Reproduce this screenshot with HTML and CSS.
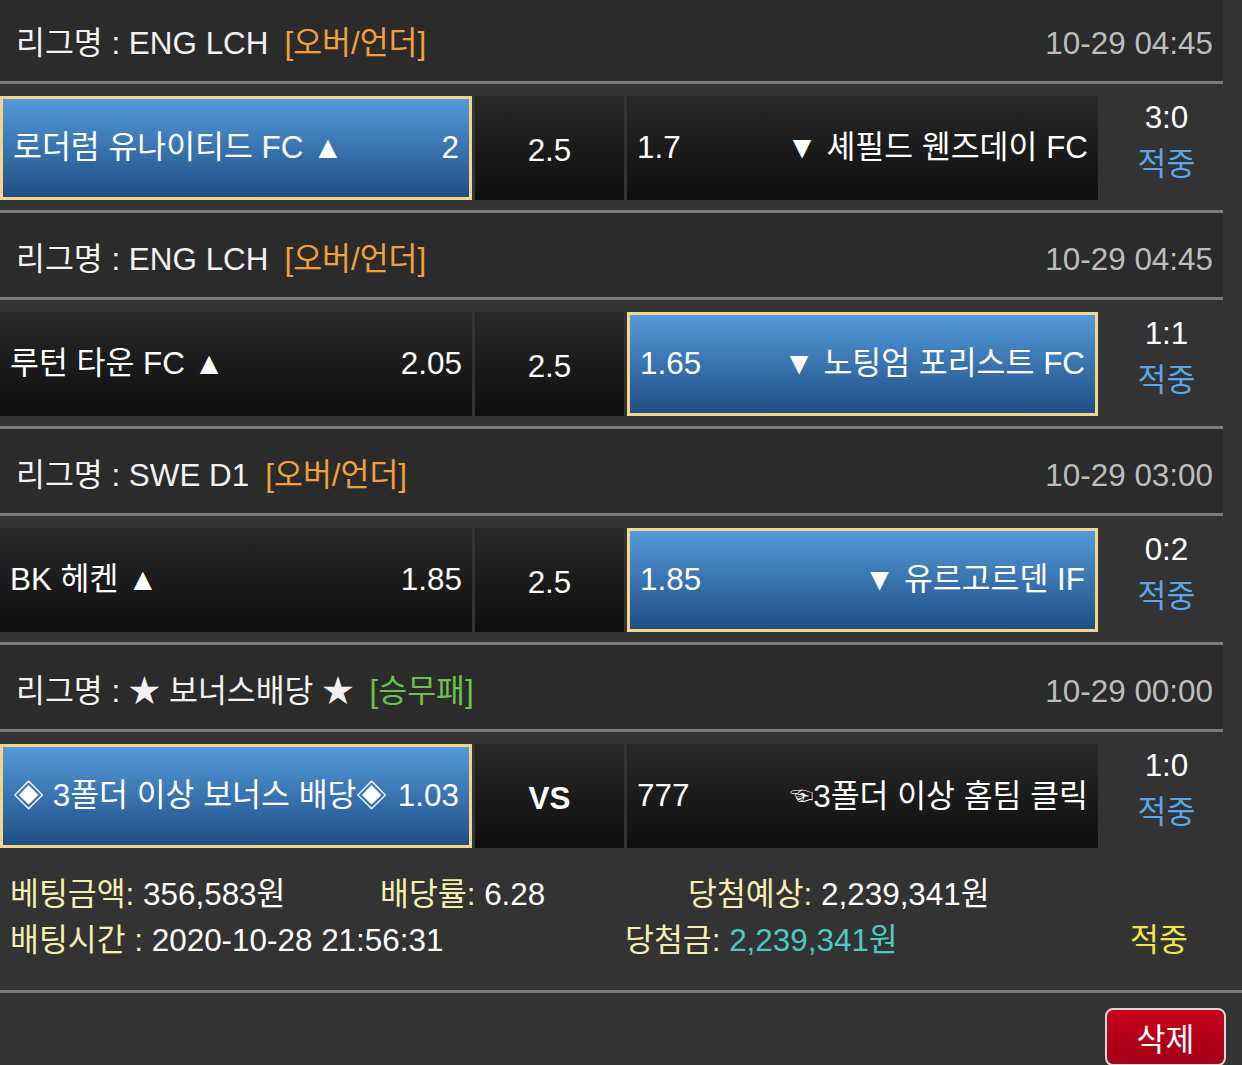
FILE: index.html
```html
<!DOCTYPE html>
<html lang="ko">
<head>
<meta charset="utf-8">
<title>배팅내역</title>
<link rel="stylesheet" href="styles.css">
</head>
<body>
<div class="list">
  <section class="game">
    <div class="league"><span>리그명 : ENG LCH</span><span class="type ou">[오버/언더]</span><span class="date">10-29 04:45</span></div>
    <div class="bet">
      <div class="cell home sel"><span>로더럼 유나이티드 FC ▲</span><span>2</span></div>
      <div class="cell line">2.5</div>
      <div class="cell away"><span>1.7</span><span>▼ 셰필드 웬즈데이 FC</span></div>
      <div class="result"><span>3:0</span><span class="hit">적중</span></div>
    </div>
  </section>
  <section class="game">
    <div class="league"><span>리그명 : ENG LCH</span><span class="type ou">[오버/언더]</span><span class="date">10-29 04:45</span></div>
    <div class="bet">
      <div class="cell home"><span>루턴 타운 FC ▲</span><span>2.05</span></div>
      <div class="cell line">2.5</div>
      <div class="cell away sel"><span>1.65</span><span>▼ 노팅엄 포리스트 FC</span></div>
      <div class="result"><span>1:1</span><span class="hit">적중</span></div>
    </div>
  </section>
  <section class="game">
    <div class="league"><span>리그명 : SWE D1</span><span class="type ou">[오버/언더]</span><span class="date">10-29 03:00</span></div>
    <div class="bet">
      <div class="cell home"><span>BK 헤켄 ▲</span><span>1.85</span></div>
      <div class="cell line">2.5</div>
      <div class="cell away sel"><span>1.85</span><span>▼ 유르고르덴 IF</span></div>
      <div class="result"><span>0:2</span><span class="hit">적중</span></div>
    </div>
  </section>
  <section class="game">
    <div class="league"><span>리그명 : ★ 보너스배당 ★</span><span class="type wdl">[승무패]</span><span class="date">10-29 00:00</span></div>
    <div class="bet">
      <div class="cell home sel"><span>◈ 3폴더 이상 보너스 배당◈</span><span>1.03</span></div>
      <div class="cell line vs">VS</div>
      <div class="cell away"><span>777</span><span><span class="hand">☜</span>3폴더 이상 홈팀 클릭</span></div>
      <div class="result"><span>1:0</span><span class="hit">적중</span></div>
    </div>
  </section>
</div>
<div class="summary">
  <div class="srow first">
    <span><span class="lbl">베팅금액:</span> 356,583원</span>
    <span><span class="lbl">배당률:</span> 6.28</span>
    <span><span class="lbl">당첨예상:</span> 2,239,341원</span>
  </div>
  <div class="srow second">
    <span><span class="lbl">배팅시간 :</span> 2020-10-28 21:56:31</span>
    <span><span class="lbl">당첨금:</span> <span class="win">2,239,341원</span></span>
    <span class="status">적중</span>
  </div>
</div>
<div class="foot">
  <div class="del">삭제</div>
</div>
</body>
</html>
```
FILE: styles.css
```css
html, body {
  margin: 0;
  padding: 0;
}
body {
  background: #333333;
  color: #ffffff;
  font-family: "Liberation Sans", "Noto Sans CJK KR", sans-serif;
  font-size: 32px;
  font-size-adjust: 0.5186;
  width: 1242px;
  height: 1065px;
  overflow: hidden;
}
.list {
  margin-top: -6px;
}
.league {
  display: flex;
  align-items: center;
  box-sizing: border-box;
  height: 90px;
  margin-right: 19px;
  padding: 10px 10px 0 16px;
  background: #2b2b2b;
  border-top: 3px solid #7b7b7b;
  border-bottom: 3px solid #7b7b7b;
  color: #f2f2f2;
  line-height: 36px;
  white-space: nowrap;
}
.type {
  margin-left: 16px;
}
.ou {
  color: #f0a03c;
}
.wdl {
  color: #6cc24a;
}
.date {
  margin-left: auto;
  color: #bdbdbd;
}
.bet {
  display: flex;
  box-sizing: border-box;
  height: 126px;
  padding: 12px 0 10px;
}
.cell {
  display: flex;
  align-items: center;
  justify-content: space-between;
  box-sizing: border-box;
  padding: 0 10px;
  background: linear-gradient(#282828, #0f0f0f);
  white-space: nowrap;
  line-height: 36px;
}
.home {
  width: 472px;
}
.line {
  width: 149px;
  margin-left: 3px;
  justify-content: center;
  padding-top: 5px;
}
.vs {
  font-weight: bold;
}
.away {
  width: 471px;
  margin-left: 3px;
}
.sel {
  background: linear-gradient(#549ad9, #1e4e84);
  border: 3px solid #f1d68c;
}
.hand {
  font-size: 24px;
  vertical-align: 3px;
}
.result {
  width: 137px;
  margin-top: -1px;
  display: flex;
  flex-direction: column;
  align-items: center;
  line-height: 46px;
}
.hit {
  color: #5aa6e6;
  margin-top: 1px;
}
.summary {
  padding: 14px 0 26px 10px;
  border-bottom: 3px solid #7b7b7b;
  line-height: 46px;
  white-space: nowrap;
}
.srow {
  display: grid;
}
.first {
  grid-template-columns: 370px 308px auto;
}
.second {
  grid-template-columns: 615px 505px auto;
}
.lbl {
  color: #f3efb0;
}
.win {
  color: #4ec9c4;
}
.status {
  color: #f0e64a;
}
.foot {
  display: flex;
  justify-content: flex-end;
  padding: 15px 16px 0 0;
}
.del {
  display: flex;
  align-items: center;
  justify-content: center;
  box-sizing: border-box;
  width: 121px;
  height: 58px;
  border: 2px solid #d8d8d8;
  border-radius: 8px;
  background: linear-gradient(#c8001e, #a30016);
  color: #ffffff;
}
```
